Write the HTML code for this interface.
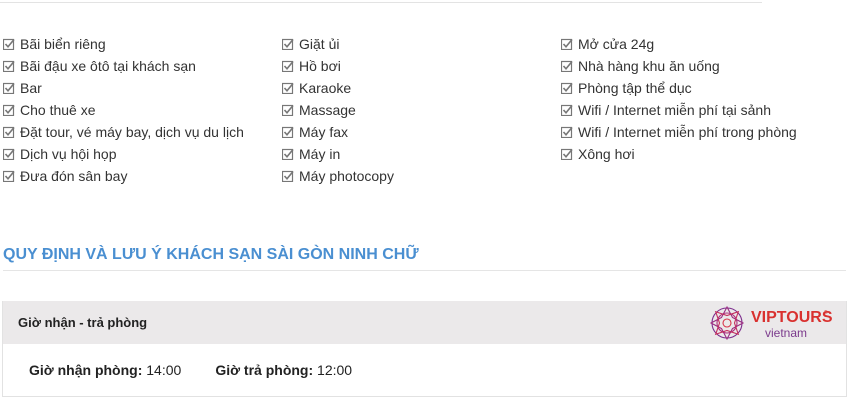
<!DOCTYPE html>
<html><head><meta charset="utf-8"><style>
body{margin:0;width:850px;height:400px;background:#fff;font-family:"Liberation Sans",Arial,sans-serif;color:#333;position:relative;overflow:hidden}
.top{position:absolute;left:0;top:2px;width:762px;height:1px;background:#e3e3e3}
.col{position:absolute;top:33px;font-size:14px}
.col div{height:22px;line-height:22px;white-space:nowrap;position:relative;padding-left:17px}
.col svg{position:absolute;left:0;top:5px}
h2{position:absolute;left:3px;top:246px;margin:0;font-size:16px;font-weight:bold;color:#4a8fd1;white-space:nowrap}
.hl{position:absolute;left:3px;top:270px;width:843px;height:1px;background:#e5e5e5}
.box{position:absolute;left:2px;top:301px;width:843px;height:95px;border:1px solid #e2e2e2;border-top:none}
.hd{height:43px;background:#ebe9ea;font-weight:bold;font-size:13px;line-height:43px;padding-left:15px;color:#222}
.bd{font-size:14px;padding:18px 0 0 26px;color:#222}
.logo{position:absolute;left:706px;top:4px;width:130px;height:36px}
</style></head><body>
<div class="top"></div>
<svg width="0" height="0" style="position:absolute"><defs><g id="ck"><rect x="0.5" y="1.5" width="10" height="10" fill="none" stroke="#777" stroke-width="1.2"/><path d="M2.5 6 L5 8.8 L11 1.5" fill="none" stroke="#777" stroke-width="1.6"/></g></defs></svg>
<div class="col" style="left:3px">
<div><svg width="12" height="12"><use href="#ck"/></svg>Bãi biển riêng</div>
<div><svg width="12" height="12"><use href="#ck"/></svg>Bãi đậu xe ôtô tại khách sạn</div>
<div><svg width="12" height="12"><use href="#ck"/></svg>Bar</div>
<div><svg width="12" height="12"><use href="#ck"/></svg>Cho thuê xe</div>
<div><svg width="12" height="12"><use href="#ck"/></svg>Đặt tour, vé máy bay, dịch vụ du lịch</div>
<div><svg width="12" height="12"><use href="#ck"/></svg>Dịch vụ hội họp</div>
<div><svg width="12" height="12"><use href="#ck"/></svg>Đưa đón sân bay</div>
</div>
<div class="col" style="left:282px">
<div><svg width="12" height="12"><use href="#ck"/></svg>Giặt ủi</div>
<div><svg width="12" height="12"><use href="#ck"/></svg>Hồ bơi</div>
<div><svg width="12" height="12"><use href="#ck"/></svg>Karaoke</div>
<div><svg width="12" height="12"><use href="#ck"/></svg>Massage</div>
<div><svg width="12" height="12"><use href="#ck"/></svg>Máy fax</div>
<div><svg width="12" height="12"><use href="#ck"/></svg>Máy in</div>
<div><svg width="12" height="12"><use href="#ck"/></svg>Máy photocopy</div>
</div>
<div class="col" style="left:561px">
<div><svg width="12" height="12"><use href="#ck"/></svg>Mở cửa 24g</div>
<div><svg width="12" height="12"><use href="#ck"/></svg>Nhà hàng khu ăn uống</div>
<div><svg width="12" height="12"><use href="#ck"/></svg>Phòng tập thể dục</div>
<div><svg width="12" height="12"><use href="#ck"/></svg>Wifi / Internet miễn phí tại sảnh</div>
<div><svg width="12" height="12"><use href="#ck"/></svg>Wifi / Internet miễn phí trong phòng</div>
<div><svg width="12" height="12"><use href="#ck"/></svg>Xông hơi</div>
</div>
<h2>QUY ĐỊNH VÀ LƯU Ý KHÁCH SẠN SÀI GÒN NINH CHỮ</h2>
<div class="hl"></div>
<div class="box">
<div class="hd">Giờ nhận - trả phòng</div>
<div class="logo"><svg width="130" height="36">
<g transform="translate(18,18)" fill="none" stroke-width="1.1">
<circle r="15" stroke="#7b2a8c"/><circle r="10" stroke="#b0307a"/><circle r="4" stroke="#d8344a"/>
<path d="M0-16 L5.5-5.5 L16 0 L5.5 5.5 L0 16 L-5.5 5.5 L-16 0 L-5.5-5.5Z" stroke="#9a2a80"/>
<path d="M11.3-11.3 L0-7.5 L-11.3-11.3 L-7.5 0 L-11.3 11.3 L0 7.5 L11.3 11.3 L7.5 0Z" stroke="#c42f5e"/>
</g>
<text x="42" y="17" font-family="Liberation Sans" font-weight="bold" font-size="16" fill="#d9312f">VIPTOURS</text>
<text x="115" y="9" font-size="5" fill="#d9312f">®</text>
<text x="56" y="32" font-family="Liberation Sans" font-size="12" fill="#7b3a8c">vietnam</text>
</svg></div>
<div class="bd"><b>Giờ nhận phòng:</b> 14:00<span style="display:inline-block;width:34px"></span><b>Giờ trả phòng:</b> 12:00</div>
</div>
</body></html>
